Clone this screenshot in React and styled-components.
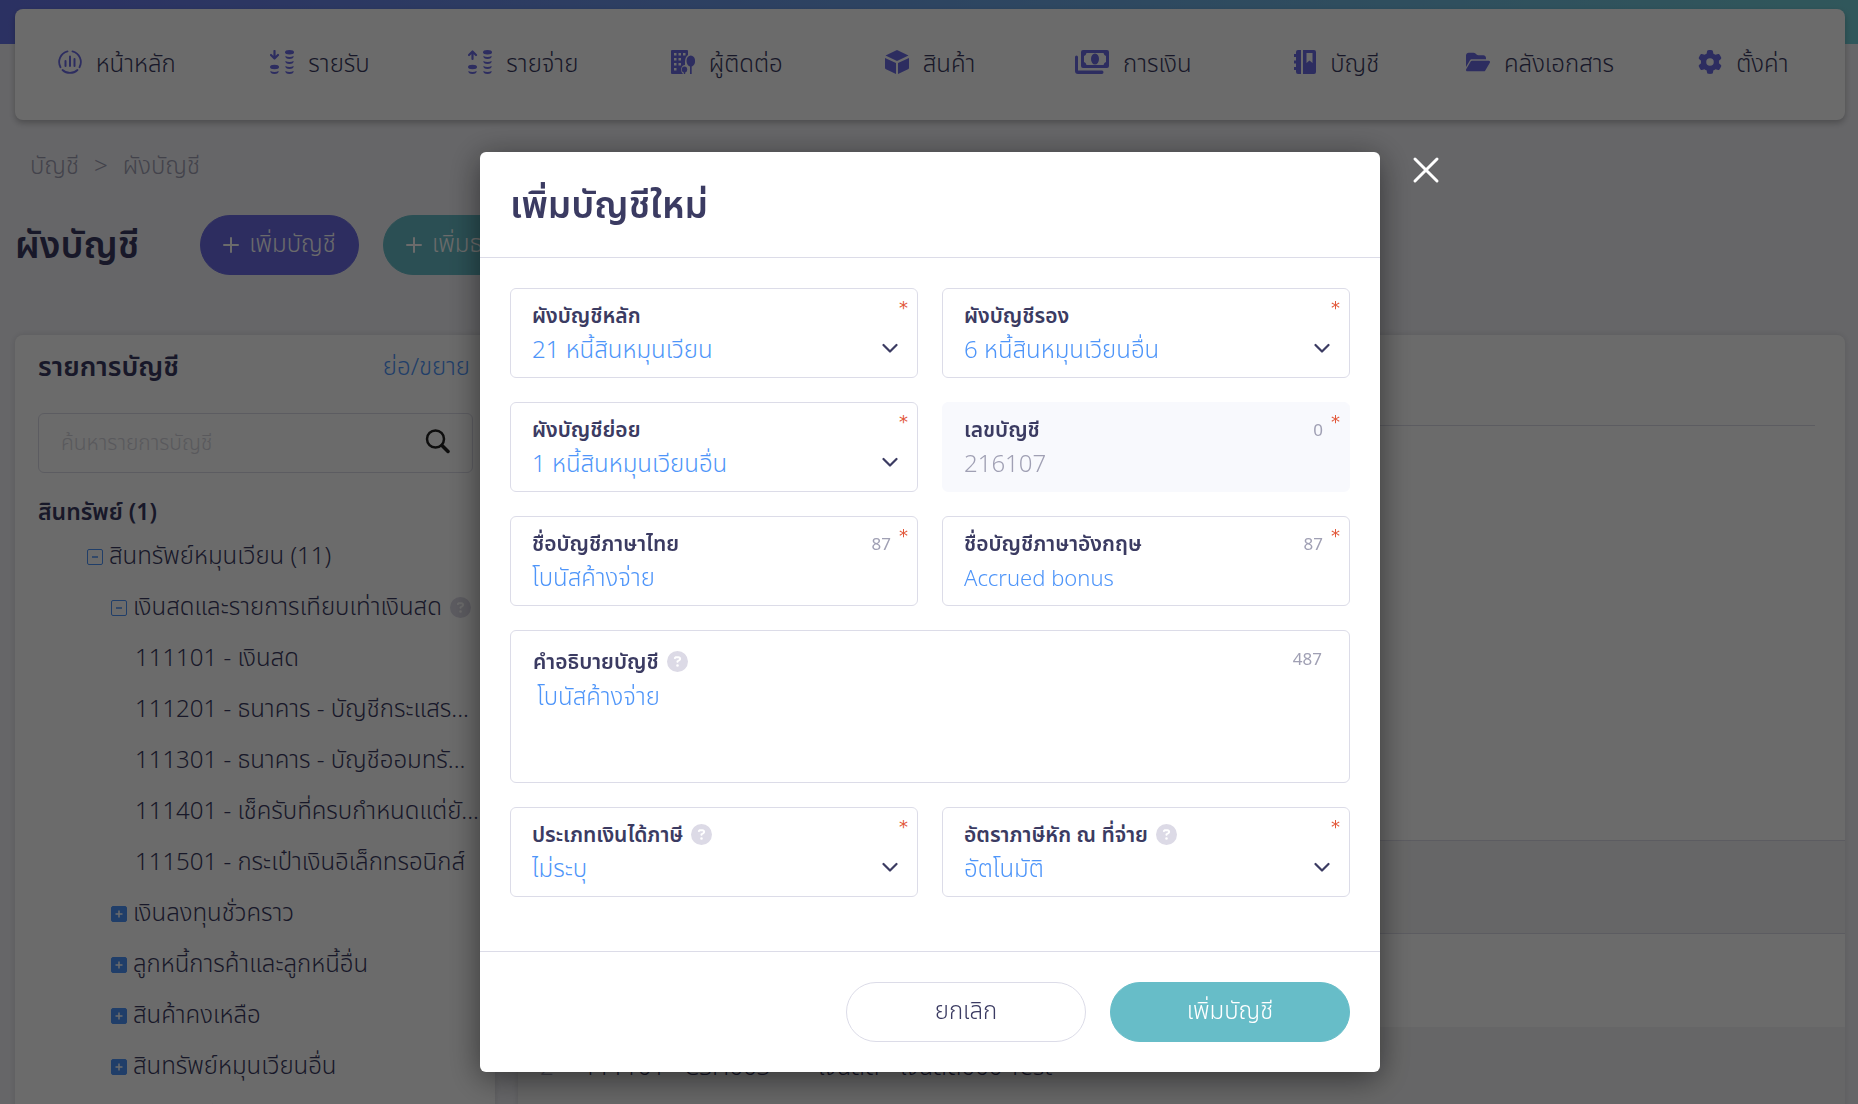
import React from "react";
import styled, { createGlobalStyle, css } from "styled-components";
import { FaFolderOpen, FaGear, FaCircleQuestion } from "react-icons/fa6";

const ink = "#3b3b62";
const blue = "#4e95f9";
const indigo = "#6c6ce5";
const teal = "#67bdc8";
const line = "#dcdce8";
const muted = "#a0a0b4";

const GlobalStyle = createGlobalStyle`
  *, *::before, *::after { box-sizing: border-box; }
  body {
    margin: 0;
    background: #f3f3f8;
    color: ${ink};
    font-family: "Noto Sans", "Noto Sans Thai", sans-serif;
    font-size: 24px;
    font-weight: 350;
    line-height: 32px;
    overflow: hidden;
  }
  button, input, select, textarea { font: inherit; color: inherit; }
  h1, h2, h3, ul, ol, p { margin: 0; padding: 0; }
  ul, ol { list-style: none; }
`;

const Page = styled.div`
  height: 100vh;
  overflow: hidden;
  padding: 9px 13px 0 15px;
  background: linear-gradient(100deg, #6875ea 0%, #6da4e8 50%, #74d0d8 100%) 0 0 / 100% 44px no-repeat;
`;

const NavCard = styled.nav`
  height: 111px;
  padding-top: 38px;
  background: #fff;
  border-radius: 8px;
  box-shadow: 0 3px 6px rgba(0, 0, 0, 0.25);
`;

const NavList = styled.ul`
  display: grid;
  grid-template-columns: repeat(9, 1fr);
`;

const NavItem = styled.li`
  display: flex;
  justify-content: center;
`;

const NavLink = styled.a`
  display: flex;
  align-items: center;
  gap: 14px;
  color: ${ink};
  text-decoration: none;
  white-space: nowrap;
  svg {
    height: 24px;
    width: auto;
    color: ${indigo};
    margin-bottom: 6px;
  }
`;

const Crumbs = styled.ol`
  display: flex;
  gap: 15px;
  margin-top: 29px;
  padding-left: 15px;
  color: ${muted};
`;

const TitleRow = styled.div`
  display: flex;
  align-items: center;
  height: 60px;
  margin-top: 34px;
`;

const PageTitle = styled.h1`
  width: 185px;
  padding-bottom: 2px;
  font-size: 37px;
  line-height: 48px;
  font-weight: 600;
`;

const Text = styled.span`
  padding-bottom: 4px;
`;

const PillButton = styled.button`
  display: flex;
  align-items: center;
  justify-content: center;
  gap: 10px;
  height: 60px;
  min-width: ${(p) => (p.$wide ? 240 : 159)}px;
  padding: 0 22px;
  margin-right: ${(p) => (p.$wide ? 0 : 24)}px;
  border: 1px solid ${(p) => p.$border || p.$bg};
  border-radius: 30px;
  background: ${(p) => p.$bg};
  color: ${(p) => p.$fg || "#fff"};
  white-space: nowrap;
`;

const Columns = styled.div`
  display: grid;
  grid-template-columns: 480px 1fr;
  gap: 23px;
  margin-top: 60px;
`;

const Panel = styled.section`
  height: 900px;
  background: #fff;
  border-radius: 8px;
  box-shadow: 0 0 6px rgba(0, 0, 0, 0.12);
`;

const ListPanel = styled(Panel)`
  padding: 15px 22px 0 23px;
`;

const PanelHead = styled.div`
  display: flex;
  justify-content: space-between;
  align-items: center;
  height: 32px;
  padding-right: 3px;
`;

const PanelTitle = styled.h2`
  font-size: 27px;
  font-weight: 600;
`;

const TextLink = styled.a`
  color: ${blue};
  text-decoration: none;
`;

const SearchBox = styled.label`
  display: flex;
  align-items: center;
  height: 60px;
  margin-top: 31px;
  padding: 0 22px 3px;
  border: 1px solid ${line};
  border-radius: 6px;
  input {
    flex: 1;
    min-width: 0;
    padding: 0;
    border: 0;
    outline: 0;
    background: transparent;
    font-size: 21px;
  }
  input::placeholder { color: #d4d4dc; opacity: 1; }
`;

const GroupTitle = styled.h3`
  margin-top: 22px;
  font-size: 23px;
  font-weight: 600;
`;

const TreeRow = styled.li`
  display: flex;
  align-items: center;
  height: 51px;
  padding-left: ${(p) => 49 + p.$level * 24}px;
  white-space: nowrap;
  svg { flex: none; }
`;

const Tree = styled.ul`
  margin-top: 4px;
`;

const Toggle = styled.button`
  flex: none;
  width: 16px;
  height: 16px;
  margin-right: 6px;
  padding: 0;
  border: 1px solid ${blue};
  border-radius: 2px;
  background: ${(p) => (p.$open ? "transparent" : blue)};
  color: ${(p) => (p.$open ? blue : "#fff")};
  svg { display: block; }
`;

const HelpIcon = styled(FaCircleQuestion)`
  width: 21px;
  height: 21px;
  margin-left: 8px;
  color: #dcdae6;
`;

const DetailPanel = styled(Panel)`
  overflow: hidden;
`;

const DetailHead = styled.div`
  height: 91px;
  margin: 0 30px;
  border-bottom: 1px solid ${line};
`;

const DetailBody = styled.div`
  height: 414px;
`;

const Table = styled.table`
  width: 100%;
  border-collapse: collapse;
  table-layout: fixed;
  th { height: 93px; background: #f4f4f5; border-top: 1px solid ${line}; border-bottom: 1px solid ${line}; }
  td { height: 93px; padding: 0 0 14px; white-space: nowrap; }
  tr:nth-child(even) td { background: #f4f4f5; }
  td:first-child { padding-left: 22px; color: ${muted}; }
`;

const Overlay = styled.div`
  position: fixed;
  inset: 0;
  display: flex;
  align-items: flex-start;
  justify-content: center;
  padding-top: 152px;
  background: rgba(0, 0, 0, 0.58);
`;

const Dialog = styled.div`
  position: relative;
  width: 900px;
  background: #fff;
  border-radius: 6px;
  box-shadow: 0 6px 32px rgba(0, 0, 0, 0.5);
  margin-left: 2px;
`;

const DialogHead = styled.header`
  display: flex;
  align-items: center;
  height: 106px;
  padding: 0 30px 2px;
  border-bottom: 1px solid ${line};
  h2 { font-size: 37px; line-height: 52px; font-weight: 600; }
`;

const CloseButton = styled.button`
  position: absolute;
  top: 4px;
  left: 932px;
  width: 28px;
  height: 28px;
  padding: 0;
  border: 0;
  background: none;
  color: #fff;
  svg { display: block; }
`;

const Form = styled.form`
  display: grid;
  grid-template-columns: 1fr 1fr;
  gap: 24px;
  padding: 30px 30px 54px;
`;

const Field = styled.div`
  position: relative;
  grid-column: ${(p) => (p.$full ? "1 / -1" : "auto")};
  height: ${(p) => (p.$full ? 153 : 90)}px;
  padding: ${(p) => (p.$full ? "14px 22px 0" : "10px 21px 0")};
  border: 1px solid ${(p) => (p.$readOnly ? "#f8f9fd" : line)};
  border-radius: 6px;
  background: ${(p) => (p.$readOnly ? "#f8f9fd" : "#fff")};
`;

const LabelRow = styled.div`
  display: flex;
  align-items: center;
  height: 32px;
  label { font-size: 21px; font-weight: 600; white-space: nowrap; }
`;

const Counter = styled.span`
  margin-left: auto;
  padding: ${(p) => (p.$raised ? "0 5px 4px 0" : "2px 5px 0 0")};
  font-size: 17px;
  font-weight: 400;
  color: ${muted};
`;

const Required = styled.span`
  position: absolute;
  top: 3px;
  right: 9px;
  font-family: "DejaVu Sans", sans-serif;
  font-size: 18px;
  font-weight: 400;
  line-height: 32px;
  color: #e2583a;
`;

const control = css`
  display: block;
  width: 100%;
  height: 36px;
  padding: 0;
  border: 0;
  outline: 0;
  background: transparent;
  color: ${(p) => (p.readOnly ? muted : blue)};
  line-height: 36px;
`;

const Select = styled.select`
  ${control}
  appearance: none;
`;
const Input = styled.input`
  ${control}
  font-size: ${(p) => (p.lang === "en" ? 22 : 24)}px;
`;
const TextArea = styled.textarea`
  ${control}
  height: 84px;
  padding: 1px 0 0 4px;
  resize: none;
`;

const Chevron = styled.svg`
  position: absolute;
  right: 19px;
  top: 54px;
  pointer-events: none;
`;

const DialogFoot = styled.footer`
  display: flex;
  justify-content: flex-end;
  gap: 24px;
  padding: 30px;
  border-top: 1px solid ${line};
`;

const HomeIcon = () => (
  <svg viewBox="0 0 24 24" fill="none" stroke="currentColor" strokeWidth="1.8" strokeLinecap="round">
    <path d="M9.5 1.3A11 11 0 0 0 2.5 17.200M14.500 1.300A11 11 0 0 1 21.500 17.200M4.500 20A11 11 0 0 0 19.500 20" />
    <path d="M7.500 11v5M12 6.500v9.500M16.500 9v7" strokeWidth="2" />
  </svg>
);

const CoinsIcon = ({ up }) => (
  <svg viewBox="0 0 24 24" fill="currentColor">
    <path
      d={up ? "M4.500 9V1.500M1 5L4.500 1.500L8 5" : "M4.500 1V8.500M1 5L4.500 8.500L8 5"}
      fill="none" stroke="currentColor" strokeWidth="2.200" strokeLinecap="round" strokeLinejoin="round"
    />
    <ellipse cx="4.500" cy="17" rx="4.500" ry="2.200" />
    <path d="M0.300 21q4.200 1.800 8.400 0q0 3-4.200 3T0.300 21z" />
    <ellipse cx="19.500" cy="2.200" rx="4.500" ry="2.200" />
    {[6, 11, 16, 21].map((y) => (
      <path key={y} d={`M15.300 ${y}q4.200 1.800 8.400 0q0 3-4.200 3T15.300 ${y}z`} />
    ))}
  </svg>
);

const BuildingIcon = () => (
  <svg viewBox="0 0 24 24" fill="currentColor">
    <path fillRule="evenodd" d="M1 0h15q1 0 1 1v4q-3 2-3 7v3q-3 0-4 4 0 3 2 5H1q-1 0-1-1V1q0-1 1-1zM3 3v2.500h2.500V3zM7.500 3v2.500H10V3zM12 3v2.500h2.500V3zM3 8v2.500h2.500V8zM7.500 8v2.500H10V8zM3 13v2.500h2.500V13zM7.500 13v2.500H10V13zM3 18v2.500h2.500V18z" />
    <ellipse cx="19.800" cy="11" rx="4.300" ry="5.500" />
    <path d="M19 14h1.700v10H19z" />
    <ellipse cx="13.500" cy="19.500" rx="2.700" ry="3" />
    <path d="M12.800 20h1.400v4h-1.400z" />
  </svg>
);

const BoxIcon = () => (
  <svg viewBox="0 0 24 24" fill="currentColor">
    <path d="M12 0L23.500 5.500L12 11L0.500 5.500zM0 8L11 13V24L1 19.300Q0 18.800 0 18zM24 8L13 13V24L23 19.300Q24 18.800 24 18z" />
  </svg>
);

const MoneyIcon = () => (
  <svg viewBox="0 0 34 24" fill="currentColor">
    <path fillRule="evenodd" d="M8 0h24q2 0 2 2v14q0 2-2 2H8q-2 0-2-2V2q0-2 2-2zM11.500 3Q11 5.500 9 6v6q2 .5 2.500 3h17q.5-2.500 2.500-3V6q-2-.5-2.500-3z" />
    <ellipse cx="20" cy="9" rx="4" ry="5.500" />
    <path d="M0 7q0-1.500 1.500-1.500T3 7v13.500h24q1.500 0 1.500 1.700T27 24H3q-3 0-3-3z" />
  </svg>
);

const BookIcon = () => (
  <svg viewBox="0 0 22 24" fill="currentColor">
    <path fillRule="evenodd" d="M9 0h11q2 0 2 2v20q0 2-2 2H9zM12.500 3v10l3-2.500 3 2.500V3z" />
    <path d="M4 0h3v24H4q-2 0-2-2v-2H0v-3h2v-3.500H0v-3h2V7H0V4h2V2q0-2 2-2z" />
  </svg>
);

const SearchIcon = () => (
  <svg width="25" height="25" viewBox="0 0 25 25" fill="none" stroke="#222" strokeWidth="2.500" strokeLinecap="round">
    <circle cx="10.500" cy="10" r="8.500" />
    <path d="M17 16.500L23 22.500" strokeWidth="3.500" />
  </svg>
);

const navItems = [
  ["หน้าหลัก", <HomeIcon />],
  ["รายรับ", <CoinsIcon />],
  ["รายจ่าย", <CoinsIcon up />],
  ["ผู้ติดต่อ", <BuildingIcon />],
  ["สินค้า", <BoxIcon />],
  ["การเงิน", <MoneyIcon />],
  ["บัญชี", <BookIcon />],
  ["คลังเอกสาร", <FaFolderOpen />],
  ["ตั้งค่า", <FaGear />],
];

const treeRows = [
  { level: 0, state: "open", text: "สินทรัพย์หมุนเวียน (11)" },
  { level: 1, state: "open", text: "เงินสดและรายการเทียบเท่าเงินสด", help: true },
  { level: 2, text: "111101 - เงินสด" },
  { level: 2, text: "111201 - ธนาคาร - บัญชีกระแสร..." },
  { level: 2, text: "111301 - ธนาคาร - บัญชีออมทรั..." },
  { level: 2, text: "111401 - เช็ครับที่ครบกำหนดแต่ยั..." },
  { level: 2, text: "111501 - กระเป๋าเงินอิเล็กทรอนิกส์" },
  { level: 1, state: "closed", text: "เงินลงทุนชั่วคราว" },
  { level: 1, state: "closed", text: "ลูกหนี้การค้าและลูกหนี้อื่น" },
  { level: 1, state: "closed", text: "สินค้าคงเหลือ" },
  { level: 1, state: "closed", text: "สินทรัพย์หมุนเวียนอื่น" },
  { level: 0, state: "closed", text: "สินทรัพย์ไม่หมุนเวียน" },
];

const fields = [
  { id: "main", label: "ผังบัญชีหลัก", value: "21 หนี้สินหมุนเวียน", kind: "select" },
  { id: "second", label: "ผังบัญชีรอง", value: "6 หนี้สินหมุนเวียนอื่น", kind: "select" },
  { id: "sub", label: "ผังบัญชีย่อย", value: "1 หนี้สินหมุนเวียนอื่น", kind: "select" },
  { id: "code", label: "เลขบัญชี", value: "216107", kind: "input", left: "0", readOnly: true },
  { id: "thai", label: "ชื่อบัญชีภาษาไทย", value: "โบนัสค้างจ่าย", kind: "input", left: "87" },
  { id: "english", label: "ชื่อบัญชีภาษาอังกฤษ", value: "Accrued bonus", kind: "input", left: "87", lang: "en" },
  { id: "detail", label: "คำอธิบายบัญชี", value: "โบนัสค้างจ่าย", kind: "area", left: "487", help: true },
  { id: "income", label: "ประเภทเงินได้ภาษี", value: "ไม่ระบุ", kind: "select", help: true },
  { id: "rate", label: "อัตราภาษีหัก ณ ที่จ่าย", value: "อัตโนมัติ", kind: "select", help: true },
];

function FormField({ id, label, value, kind, left, help, readOnly, lang }) {
  const area = kind === "area";
  return (
    <Field $full={area} $readOnly={readOnly}>
      <LabelRow>
        <label htmlFor={id}>{label}</label>
        {help && <HelpIcon />}
        {left && <Counter $raised={area}>{left}</Counter>}
      </LabelRow>
      {kind === "select" && (
        <>
          <Select id={id} defaultValue={value}><option>{value}</option></Select>
          <Chevron width="16" height="11" viewBox="0 0 16 11" fill="none" stroke={ink} strokeWidth="2.200" strokeLinecap="round" strokeLinejoin="round">
            <path d="M1.500 2L8 8.500L14.500 2" />
          </Chevron>
        </>
      )}
      {kind === "input" && <Input id={id} lang={lang} defaultValue={value} readOnly={readOnly} />}
      {area && <TextArea id={id} defaultValue={value} />}
      {!area && <Required>*</Required>}
    </Field>
  );
}

const Plus = () => (
  <svg width="16" height="16" viewBox="0 0 16 16" fill="none" stroke="currentColor" strokeWidth="2" strokeLinecap="round">
    <path d="M8 1v14M1 8h14" />
  </svg>
);

export default function App() {
  return (
    <>
      <GlobalStyle />
      <Page>
        <NavCard>
          <NavList>
            {navItems.map(([text, icon]) => (
              <NavItem key={text}>
                <NavLink href="#">{icon}<Text>{text}</Text></NavLink>
              </NavItem>
            ))}
          </NavList>
        </NavCard>
        <Crumbs>
          <li>บัญชี</li>
          <li aria-hidden="true">&gt;</li>
          <li>ผังบัญชี</li>
        </Crumbs>
        <TitleRow>
          <PageTitle>ผังบัญชี</PageTitle>
          <PillButton $bg={indigo}><Plus /><Text>เพิ่มบัญชี</Text></PillButton>
          <PillButton $bg={teal}><Plus /><Text>เพิ่มธนาคาร</Text></PillButton>
        </TitleRow>
        <Columns>
          <ListPanel>
            <PanelHead>
              <PanelTitle>รายการบัญชี</PanelTitle>
              <TextLink href="#">ย่อ/ขยาย</TextLink>
            </PanelHead>
            <SearchBox>
              <input type="text" aria-label="ค้นหารายการบัญชี" placeholder="ค้นหารายการบัญชี" />
              <SearchIcon />
            </SearchBox>
            <GroupTitle>สินทรัพย์ (1)</GroupTitle>
            <Tree>
              {treeRows.map((row) => (
                <TreeRow key={row.text} $level={row.level}>
                  {row.state && (
                    <Toggle $open={row.state === "open"} aria-label={row.text}>
                      <svg width="14" height="14" viewBox="0 0 14 14" stroke="currentColor" strokeWidth="1.500">
                        <path d={row.state === "open" ? "M4 7h6" : "M3.500 7h7M7 3.500v7"} />
                      </svg>
                    </Toggle>
                  )}
                  <Text>{row.text}</Text>
                  {row.help && <HelpIcon />}
                </TreeRow>
              ))}
            </Tree>
          </ListPanel>
          <DetailPanel>
            <DetailHead />
            <DetailBody />
            <Table>
              <colgroup>
                <col width="65" /><col width="101" /><col width="134" /><col width="82" /><col />
              </colgroup>
              <thead><tr><th /><th /><th /><th /><th /></tr></thead>
              <tbody>
                <tr><td /><td /><td /><td /><td /></tr>
                <tr><td>2</td><td>111101</td><td>CSH003</td><td>เงินสด</td><td>เงินสด000 Test</td></tr>
              </tbody>
            </Table>
          </DetailPanel>
        </Columns>
      </Page>
      <Overlay>
        <Dialog role="dialog" aria-modal="true" aria-labelledby="dialog-title">
          <DialogHead><h2 id="dialog-title">เพิ่มบัญชีใหม่</h2></DialogHead>
          <Form id="account-form">
            {fields.map((f) => <FormField key={f.id} {...f} />)}
          </Form>
          <DialogFoot>
            <PillButton $wide type="button" $bg="#fff" $border={line} $fg={ink}><Text>ยกเลิก</Text></PillButton>
            <PillButton $wide type="button" $bg={teal}><Text>เพิ่มบัญชี</Text></PillButton>
          </DialogFoot>
          <CloseButton type="button" aria-label="ปิด">
            <svg width="28" height="28" viewBox="0 0 28 28" stroke="currentColor" strokeWidth="3" strokeLinecap="round">
              <path d="M3 3L25 25M25 3L3 25" />
            </svg>
          </CloseButton>
        </Dialog>
      </Overlay>
    </>
  );
}
